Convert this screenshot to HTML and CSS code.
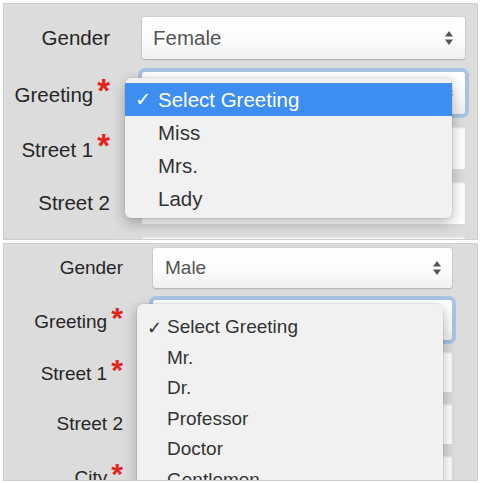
FILE: index.html
```html
<!DOCTYPE html>
<html>
<head>
<meta charset="utf-8">
<link rel="stylesheet" href="styles.css">
</head>
<body>
<div class="page">
  <section class="panel panel-a">
    <div class="form">
      <div class="row">
        <span class="lbl">Gender</span>
        <div class="select"><span class="val">Female</span>
          <svg class="arrows" width="8" height="14" viewBox="0 0 8 14"><path d="M4 0 L8 5.5 H0 Z M0 8.5 H8 L4 14 Z" fill="#555"/></svg>
        </div>
      </div>
      <div class="row">
        <span class="lbl required">Greeting<span class="req">*</span></span>
        <div class="select focused"><span class="val"></span>
          <svg class="arrows" width="8" height="14" viewBox="0 0 8 14"><path d="M4 0 L8 5.5 H0 Z M0 8.5 H8 L4 14 Z" fill="#555"/></svg>
        </div>
      </div>
      <div class="row">
        <span class="lbl required">Street 1<span class="req">*</span></span>
        <div class="input"></div>
      </div>
      <div class="row">
        <span class="lbl">Street 2</span>
        <div class="input"></div>
      </div>
      <div class="row">
        <span class="lbl"></span>
        <div class="input"></div>
      </div>
    </div>
    <ul class="menu menu-a">
      <li class="item selected"><span class="check">✓</span>Select Greeting</li>
      <li class="item">Miss</li>
      <li class="item">Mrs.</li>
      <li class="item">Lady</li>
    </ul>
  </section>

  <section class="panel panel-b">
    <div class="form">
      <div class="row">
        <span class="lbl">Gender</span>
        <div class="select"><span class="val">Male</span>
          <svg class="arrows" width="8" height="14" viewBox="0 0 8 14"><path d="M4 0 L8 5.5 H0 Z M0 8.5 H8 L4 14 Z" fill="#555"/></svg>
        </div>
      </div>
      <div class="row">
        <span class="lbl required">Greeting<span class="req">*</span></span>
        <div class="select focused"><span class="val"></span>
          <svg class="arrows" width="8" height="14" viewBox="0 0 8 14"><path d="M4 0 L8 5.5 H0 Z M0 8.5 H8 L4 14 Z" fill="#555"/></svg>
        </div>
      </div>
      <div class="row">
        <span class="lbl required">Street 1<span class="req">*</span></span>
        <div class="input"></div>
      </div>
      <div class="row">
        <span class="lbl">Street 2</span>
        <div class="input"></div>
      </div>
      <div class="row">
        <span class="lbl required">City<span class="req">*</span></span>
        <div class="input"></div>
      </div>
    </div>
    <ul class="menu menu-b">
      <li class="item"><span class="check">✓</span>Select Greeting</li>
      <li class="item">Mr.</li>
      <li class="item">Dr.</li>
      <li class="item">Professor</li>
      <li class="item">Doctor</li>
      <li class="item">Gentlemen</li>
    </ul>
  </section>
</div>
</body>
</html>
```

FILE: styles.css
```css
* { box-sizing: border-box; }
html, body { margin: 0; padding: 0; background: #fff; }
body { font-family: "Liberation Sans", Arial, sans-serif; color: #222; }

.page {
  width: 485px;
  height: 483px;
  padding: 3px 7px 0 3px;
  display: flex;
  flex-direction: column;
  gap: 3px;
  overflow: hidden;
}

.panel {
  position: relative;
  background: #dcdcdc;
  border: 1px solid #cfcfcf;
  overflow: hidden;
  flex: none;
}
.panel-a { height: 237px; font-size: 20.5px; }
.panel-b { height: 238px; font-size: 19px; }

.form { display: flex; flex-direction: column; }
.panel-a .form { padding-top: 13px; gap: 13px; }
.panel-b .form { padding-top: 4px; gap: 12px; }

.row { display: flex; align-items: center; flex: none; }
.panel-a .row { height: 42px; gap: 32px; }
.panel-b .row { height: 40px; gap: 30px; }

.lbl {
  flex: none;
  text-align: right;
  color: #262626;
  white-space: nowrap;
  line-height: 1.2;
}
.lbl.required { padding-top: 4px; }
.panel-a .lbl { width: 106px; }
.panel-b .lbl { width: 119px; }

.req {
  color: #e3241b;
  font-weight: bold;
  font-size: 1.6em;
  line-height: 0;
  vertical-align: 0;
  margin-left: 4px;
}

.select, .input { height: 100%; flex: none; }
.panel-a .select, .panel-a .input { width: 323px; }
.panel-b .select, .panel-b .input { width: 299px; }

.select {
  display: flex;
  align-items: center;
  justify-content: space-between;
  background: linear-gradient(#ffffff 0%, #fbfbfb 60%, #efefef 100%);
  border-radius: 3px;
  box-shadow: 0 1px 2px rgba(0,0,0,0.18), 0 0 0 1px rgba(0,0,0,0.04);
  color: #555;
}
.panel-a .select { padding: 0 12px 0 11px; }
.panel-b .select { padding: 0 11px 0 12px; }

.select.focused {
  box-shadow: 0 0 0 4px rgba(150, 188, 232, 0.75), 0 1px 2px rgba(0,0,0,0.18);
}

.arrows { flex: none; }

.input {
  background: #fff;
  box-shadow: inset 0 1px 2px rgba(0,0,0,0.12);
}

.menu {
  position: absolute;
  margin: 0;
  list-style: none;
  background: #f1f1f1;
  border-radius: 6px;
  box-shadow: 0 5px 14px rgba(0,0,0,0.28), 0 0 0 1px rgba(0,0,0,0.06);
  color: #333;
}
.menu-a {
  left: 121px;
  top: 74px;
  width: 327px;
  height: 140px;
  padding: 5px 0 3px;
}
.menu-b {
  left: 133px;
  top: 60px;
  width: 306px;
  height: 220px;
  padding: 8px 0 0;
  border-radius: 6px 6px 0 0;
}

.item {
  display: flex;
  align-items: center;
  white-space: nowrap;
}
.menu-a .item { height: 33px; padding-left: 33px; }
.menu-b .item { height: 30.5px; padding-left: 30px; }

.check {
  font-family: "DejaVu Sans", sans-serif;
  display: inline-block;
  font-size: 0.95em;
}
.menu-a .check { width: 23px; margin-left: -23px; }
.menu-b .check { width: 20px; margin-left: -20px; }

.item.selected {
  background: #3d8ef0;
  color: #fff;
}
```
